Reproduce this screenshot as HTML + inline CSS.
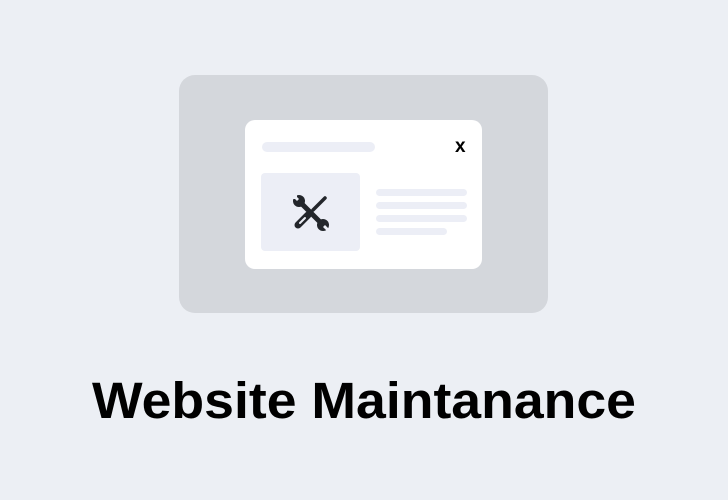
<!DOCTYPE html>
<html><head><style>
html,body{margin:0;padding:0;width:728px;height:500px;background:#eceff4;overflow:hidden;font-family:"Liberation Sans",sans-serif}
.a{position:absolute}
</style></head><body>
<div class="a" style="left:179px;top:75px;width:369px;height:238px;background:#d4d7dc;border-radius:16px"></div>
<div class="a" style="left:245px;top:120px;width:237px;height:149px;background:#fff;border-radius:10px"></div>
<div class="a" style="left:262px;top:142px;width:113px;height:10px;background:#eceef6;border-radius:5px"></div>
<div class="a" style="left:455px;top:136px;font-weight:bold;font-size:19px;color:#000">x</div>
<div class="a" style="left:261px;top:173px;width:99px;height:78px;background:#eceef6;border-radius:4px"></div>
<div class="a" style="left:376px;top:189px;width:91px;height:7px;background:#eceef6;border-radius:4px"></div>
<div class="a" style="left:376px;top:202px;width:91px;height:7px;background:#eceef6;border-radius:4px"></div>
<div class="a" style="left:376px;top:215px;width:91px;height:7px;background:#eceef6;border-radius:4px"></div>
<div class="a" style="left:376px;top:228px;width:71px;height:7px;background:#eceef6;border-radius:4px"></div>
<svg class="a" style="left:292px;top:194px" width="38" height="38" viewBox="0 0 38 38">
<g stroke="#23262b" stroke-linecap="round" fill="none">
<line x1="8" y1="8" x2="30" y2="30" stroke-width="5"/>
<line x1="33" y1="4" x2="21" y2="16" stroke-width="3.5"/>
<line x1="16" y1="21" x2="6" y2="31" stroke-width="7"/>
</g>
<circle cx="7" cy="7" r="6" fill="#23262b"/>
<circle cx="31" cy="31" r="6" fill="#23262b"/>
<rect x="-1" y="-1" width="6" height="6" transform="rotate(0)" fill="#eceef6"/>
<path d="M1 3 L5 7 L7 5 L3 1Z" fill="#eceef6"/>
<path d="M37 35 L33 31 L31 33 L35 37Z" fill="#eceef6"/>
<line x1="13" y1="24" x2="8" y2="29" stroke="#eceef6" stroke-width="2" stroke-linecap="round"/>
</svg>
<svg class="a" style="left:0;top:360px" width="728" height="80">
<text x="92" y="58" textLength="544" lengthAdjust="spacingAndGlyphs" font-family="Liberation Sans, sans-serif" font-weight="bold" font-size="51" fill="#000">Website Maintanance</text>
</svg>
</body></html>
